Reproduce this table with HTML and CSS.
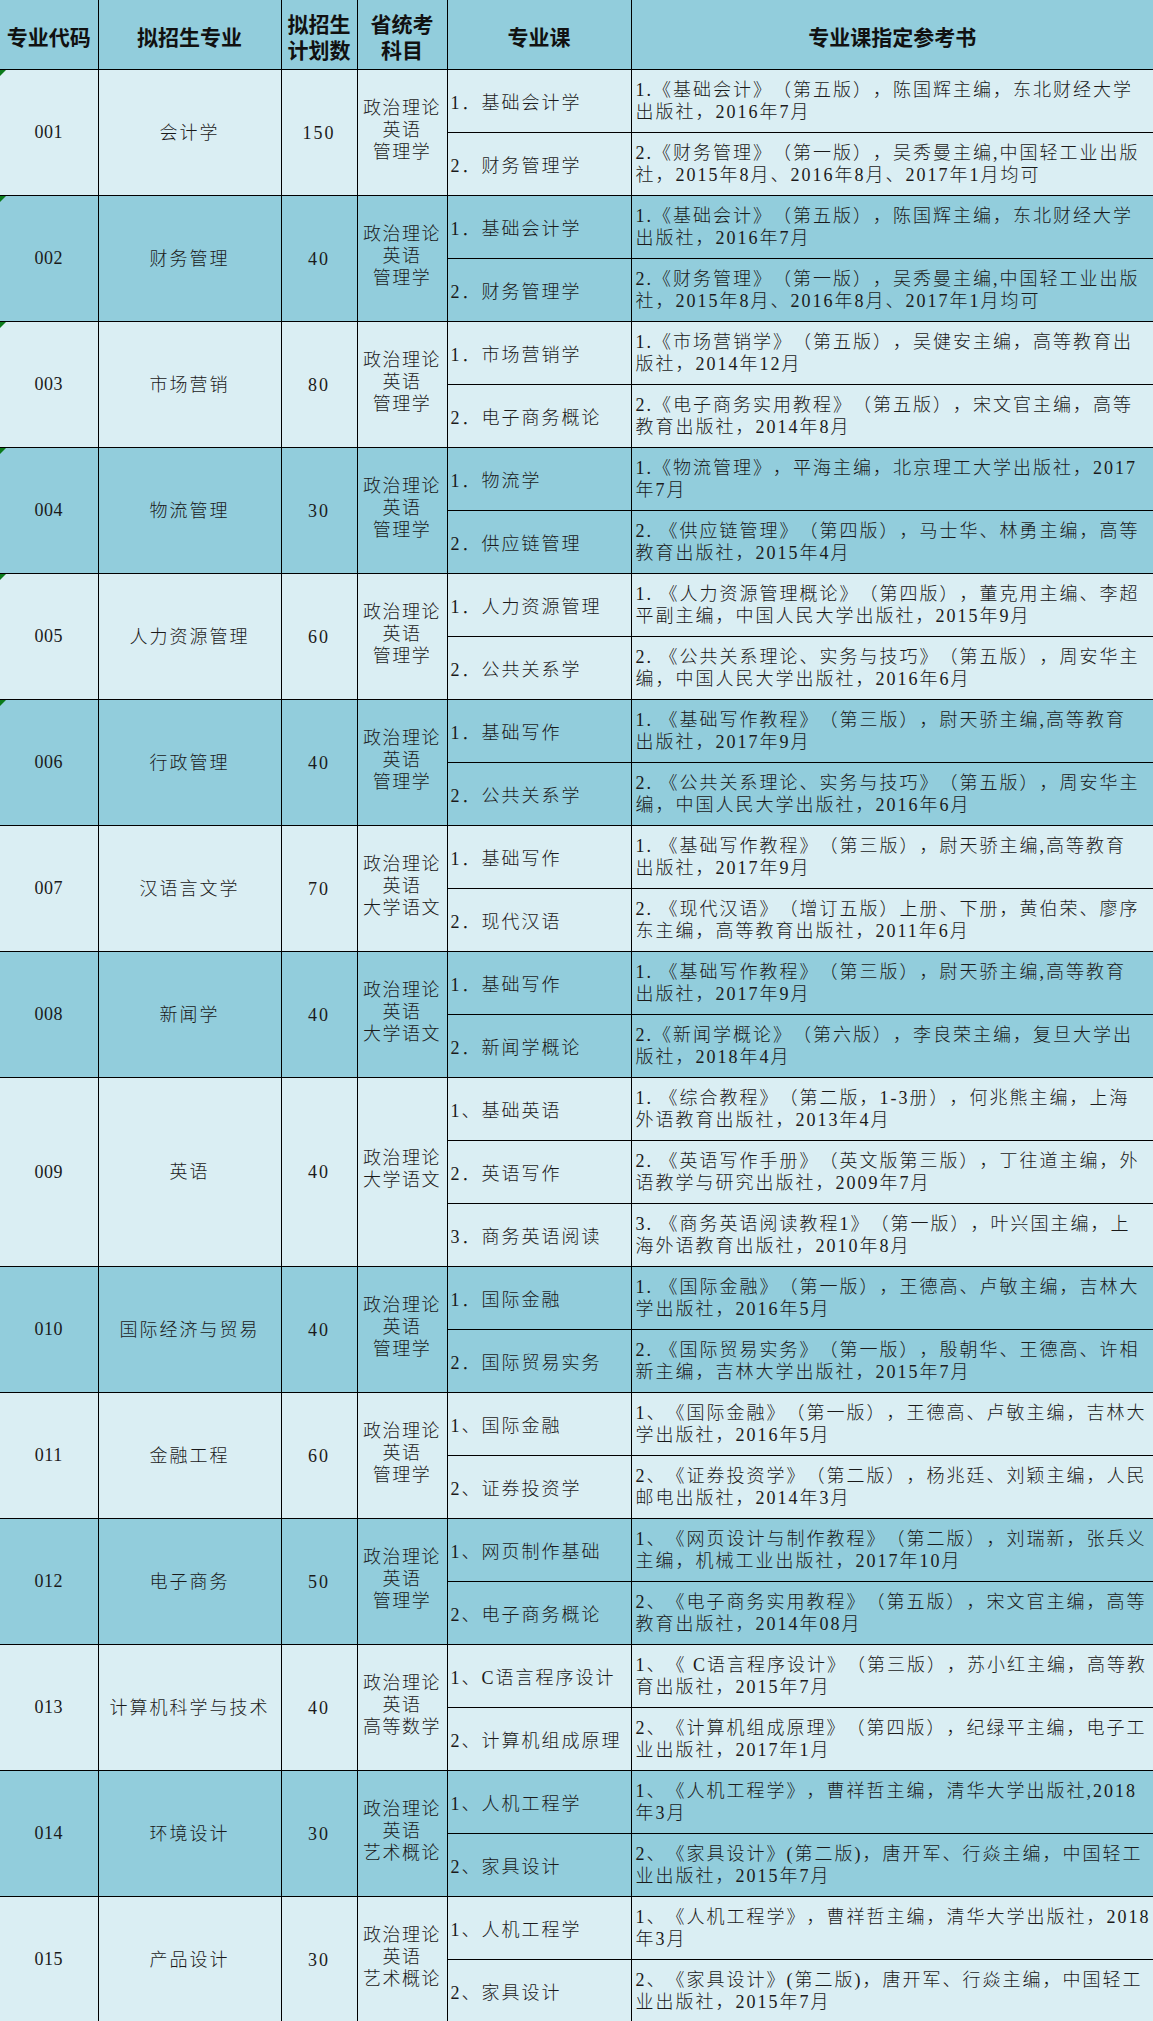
FILE: index.html
```html
<!DOCTYPE html>
<html lang="zh-CN">
<head>
<meta charset="utf-8">
<title>专业课指定参考书</title>
<link rel="stylesheet" href="styles.css">
</head>
<body>
<table class="plan">
  <colgroup>
    <col class="c-code">
    <col class="c-major">
    <col class="c-num">
    <col class="c-exam">
    <col class="c-course">
    <col class="c-book">
  </colgroup>
  <thead>
    <tr class="head">
      <th>专业代码</th>
      <th>拟招生专业</th>
      <th>拟招生<br>计划数</th>
      <th>省统考<br>科目</th>
      <th>专业课</th>
      <th>专业课指定参考书</th>
    </tr>
  </thead>
  <tbody>
    <!-- 001 -->
    <tr class="sub light">
      <td rowspan="2" class="code mark">001</td>
      <td rowspan="2" class="center">会计学</td>
      <td rowspan="2" class="center">150</td>
      <td rowspan="2" class="center exam">政治理论<br>英语<br>管理学</td>
      <td class="course">1．基础会计学</td>
      <td class="book">1.《基础会计》（第五版），陈国辉主编，东北财经大学<br>出版社，2016年7月</td>
    </tr>
    <tr class="sub light">
      <td class="course">2．财务管理学</td>
      <td class="book">2.《财务管理》（第一版），吴秀曼主编,中国轻工业出版<br>社，2015年8月、2016年8月、2017年1月均可</td>
    </tr>
    <!-- 002 -->
    <tr class="sub dark">
      <td rowspan="2" class="code mark">002</td>
      <td rowspan="2" class="center">财务管理</td>
      <td rowspan="2" class="center">40</td>
      <td rowspan="2" class="center exam">政治理论<br>英语<br>管理学</td>
      <td class="course">1．基础会计学</td>
      <td class="book">1.《基础会计》（第五版），陈国辉主编，东北财经大学<br>出版社，2016年7月</td>
    </tr>
    <tr class="sub dark">
      <td class="course">2．财务管理学</td>
      <td class="book">2.《财务管理》（第一版），吴秀曼主编,中国轻工业出版<br>社，2015年8月、2016年8月、2017年1月均可</td>
    </tr>
    <!-- 003 -->
    <tr class="sub light">
      <td rowspan="2" class="code mark">003</td>
      <td rowspan="2" class="center">市场营销</td>
      <td rowspan="2" class="center">80</td>
      <td rowspan="2" class="center exam">政治理论<br>英语<br>管理学</td>
      <td class="course">1．市场营销学</td>
      <td class="book">1.《市场营销学》（第五版），吴健安主编，高等教育出<br>版社，2014年12月</td>
    </tr>
    <tr class="sub light">
      <td class="course">2．电子商务概论</td>
      <td class="book">2.《电子商务实用教程》（第五版），宋文官主编，高等<br>教育出版社，2014年8月</td>
    </tr>
    <!-- 004 -->
    <tr class="sub dark">
      <td rowspan="2" class="code mark">004</td>
      <td rowspan="2" class="center">物流管理</td>
      <td rowspan="2" class="center">30</td>
      <td rowspan="2" class="center exam">政治理论<br>英语<br>管理学</td>
      <td class="course">1．物流学</td>
      <td class="book">1.《物流管理》，平海主编，北京理工大学出版社，2017<br>年7月</td>
    </tr>
    <tr class="sub dark">
      <td class="course">2．供应链管理</td>
      <td class="book">2. 《供应链管理》（第四版），马士华、林勇主编，高等<br>教育出版社，2015年4月</td>
    </tr>
    <!-- 005 -->
    <tr class="sub light">
      <td rowspan="2" class="code mark">005</td>
      <td rowspan="2" class="center">人力资源管理</td>
      <td rowspan="2" class="center">60</td>
      <td rowspan="2" class="center exam">政治理论<br>英语<br>管理学</td>
      <td class="course">1．人力资源管理</td>
      <td class="book">1. 《人力资源管理概论》（第四版），董克用主编、李超<br>平副主编，中国人民大学出版社，2015年9月</td>
    </tr>
    <tr class="sub light">
      <td class="course">2．公共关系学</td>
      <td class="book">2. 《公共关系理论、实务与技巧》（第五版），周安华主<br>编，中国人民大学出版社，2016年6月</td>
    </tr>
    <!-- 006 -->
    <tr class="sub dark">
      <td rowspan="2" class="code mark">006</td>
      <td rowspan="2" class="center">行政管理</td>
      <td rowspan="2" class="center">40</td>
      <td rowspan="2" class="center exam">政治理论<br>英语<br>管理学</td>
      <td class="course">1．基础写作</td>
      <td class="book">1. 《基础写作教程》（第三版），尉天骄主编,高等教育<br>出版社，2017年9月</td>
    </tr>
    <tr class="sub dark">
      <td class="course">2．公共关系学</td>
      <td class="book">2. 《公共关系理论、实务与技巧》（第五版），周安华主<br>编，中国人民大学出版社，2016年6月</td>
    </tr>
    <!-- 007 -->
    <tr class="sub light">
      <td rowspan="2" class="code">007</td>
      <td rowspan="2" class="center">汉语言文学</td>
      <td rowspan="2" class="center">70</td>
      <td rowspan="2" class="center exam">政治理论<br>英语<br>大学语文</td>
      <td class="course">1．基础写作</td>
      <td class="book">1. 《基础写作教程》（第三版），尉天骄主编,高等教育<br>出版社，2017年9月</td>
    </tr>
    <tr class="sub light">
      <td class="course">2．现代汉语</td>
      <td class="book">2. 《现代汉语》（增订五版）上册、下册，黄伯荣、廖序<br>东主编，高等教育出版社，2011年6月</td>
    </tr>
    <!-- 008 -->
    <tr class="sub dark">
      <td rowspan="2" class="code">008</td>
      <td rowspan="2" class="center">新闻学</td>
      <td rowspan="2" class="center">40</td>
      <td rowspan="2" class="center exam">政治理论<br>英语<br>大学语文</td>
      <td class="course">1．基础写作</td>
      <td class="book">1. 《基础写作教程》（第三版），尉天骄主编,高等教育<br>出版社，2017年9月</td>
    </tr>
    <tr class="sub dark">
      <td class="course">2．新闻学概论</td>
      <td class="book">2.《新闻学概论》（第六版），李良荣主编，复旦大学出<br>版社，2018年4月</td>
    </tr>
    <!-- 009 -->
    <tr class="sub light">
      <td rowspan="3" class="code">009</td>
      <td rowspan="3" class="center">英语</td>
      <td rowspan="3" class="center">40</td>
      <td rowspan="3" class="center exam">政治理论<br>大学语文</td>
      <td class="course">1、基础英语</td>
      <td class="book">1. 《综合教程》（第二版，1-3册），何兆熊主编，上海<br>外语教育出版社，2013年4月</td>
    </tr>
    <tr class="sub light">
      <td class="course">2．英语写作</td>
      <td class="book">2. 《英语写作手册》（英文版第三版），丁往道主编，外<br>语教学与研究出版社，2009年7月</td>
    </tr>
    <tr class="sub light">
      <td class="course">3．商务英语阅读</td>
      <td class="book">3. 《商务英语阅读教程1》（第一版），叶兴国主编，上<br>海外语教育出版社，2010年8月</td>
    </tr>
    <!-- 010 -->
    <tr class="sub dark">
      <td rowspan="2" class="code">010</td>
      <td rowspan="2" class="center">国际经济与贸易</td>
      <td rowspan="2" class="center">40</td>
      <td rowspan="2" class="center exam">政治理论<br>英语<br>管理学</td>
      <td class="course">1．国际金融</td>
      <td class="book">1. 《国际金融》（第一版），王德高、卢敏主编，吉林大<br>学出版社，2016年5月</td>
    </tr>
    <tr class="sub dark">
      <td class="course">2．国际贸易实务</td>
      <td class="book">2. 《国际贸易实务》（第一版），殷朝华、王德高、许相<br>新主编，吉林大学出版社，2015年7月</td>
    </tr>
    <!-- 011 -->
    <tr class="sub light">
      <td rowspan="2" class="code">011</td>
      <td rowspan="2" class="center">金融工程</td>
      <td rowspan="2" class="center">60</td>
      <td rowspan="2" class="center exam">政治理论<br>英语<br>管理学</td>
      <td class="course">1、国际金融</td>
      <td class="book">1、《国际金融》（第一版），王德高、卢敏主编，吉林大<br>学出版社，2016年5月</td>
    </tr>
    <tr class="sub light">
      <td class="course">2、证券投资学</td>
      <td class="book">2、《证券投资学》（第二版），杨兆廷、刘颖主编，人民<br>邮电出版社，2014年3月</td>
    </tr>
    <!-- 012 -->
    <tr class="sub dark">
      <td rowspan="2" class="code">012</td>
      <td rowspan="2" class="center">电子商务</td>
      <td rowspan="2" class="center">50</td>
      <td rowspan="2" class="center exam">政治理论<br>英语<br>管理学</td>
      <td class="course">1、网页制作基础</td>
      <td class="book">1、《网页设计与制作教程》（第二版），刘瑞新，张兵义<br>主编，机械工业出版社，2017年10月</td>
    </tr>
    <tr class="sub dark">
      <td class="course">2、电子商务概论</td>
      <td class="book">2、《电子商务实用教程》（第五版），宋文官主编，高等<br>教育出版社，2014年08月</td>
    </tr>
    <!-- 013 -->
    <tr class="sub light">
      <td rowspan="2" class="code">013</td>
      <td rowspan="2" class="center">计算机科学与技术</td>
      <td rowspan="2" class="center">40</td>
      <td rowspan="2" class="center exam">政治理论<br>英语<br>高等数学</td>
      <td class="course">1、C语言程序设计</td>
      <td class="book">1、《 C语言程序设计》（第三版），苏小红主编，高等教<br>育出版社，2015年7月</td>
    </tr>
    <tr class="sub light">
      <td class="course">2、计算机组成原理</td>
      <td class="book">2、《计算机组成原理》（第四版），纪绿平主编，电子工<br>业出版社，2017年1月</td>
    </tr>
    <!-- 014 -->
    <tr class="sub dark">
      <td rowspan="2" class="code">014</td>
      <td rowspan="2" class="center">环境设计</td>
      <td rowspan="2" class="center">30</td>
      <td rowspan="2" class="center exam">政治理论<br>英语<br>艺术概论</td>
      <td class="course">1、人机工程学</td>
      <td class="book">1、《人机工程学》，曹祥哲主编，清华大学出版社,2018<br>年3月</td>
    </tr>
    <tr class="sub dark">
      <td class="course">2、家具设计</td>
      <td class="book">2、《家具设计》(第二版)，唐开军、行焱主编，中国轻工<br>业出版社，2015年7月</td>
    </tr>
    <!-- 015 -->
    <tr class="sub light">
      <td rowspan="2" class="code">015</td>
      <td rowspan="2" class="center">产品设计</td>
      <td rowspan="2" class="center">30</td>
      <td rowspan="2" class="center exam">政治理论<br>英语<br>艺术概论</td>
      <td class="course">1、人机工程学</td>
      <td class="book">1、《人机工程学》，曹祥哲主编，清华大学出版社，2018<br>年3月</td>
    </tr>
    <tr class="sub light last">
      <td class="course">2、家具设计</td>
      <td class="book">2、《家具设计》(第二版)，唐开军、行焱主编，中国轻工<br>业出版社，2015年7月</td>
    </tr>
  </tbody>
</table>
</body>
</html>
```

FILE: styles.css
```css
html, body {
  margin: 0;
  padding: 0;
  background: #DAEEF3;
}

.plan {
  border-collapse: collapse;
  table-layout: fixed;
  width: 1153px;
  font-family: "Liberation Serif", "Noto Sans CJK SC", serif;
  font-size: 18px;
  font-weight: 300;
  color: #1a1a1a;
  letter-spacing: 2px;
  text-spacing-trim: space-all;
}

.c-code { width: 98px; }
.c-major { width: 183px; }
.c-num { width: 76px; }
.c-exam { width: 90px; }
.c-course { width: 184px; }
.c-book { width: 522px; }

.plan th,
.plan td {
  border: 1px solid #000;
  padding: 0;
  vertical-align: middle;
  white-space: nowrap;
  overflow: hidden;
}

.plan tr > :first-child { border-left: none; }
.plan tr > :last-child { border-right: none; }

.head th {
  height: 66px;
  border-top: none;
  background: #92CDDC;
  font-family: "Noto Sans CJK SC", serif;
  font-weight: 700;
  font-size: 21px;
  line-height: 26px;
  letter-spacing: 0;
  text-align: center;
  padding-top: 3px;
  color: #111;
}

.sub { height: 63px; }

.light td { background: #DAEEF3; }
.dark td { background: #92CDDC; }

.center {
  text-align: center;
  line-height: 22px;
}

.code {
  text-align: center;
  position: relative;
  letter-spacing: 0.5px;
}

.plan td.exam {
  line-height: 22px;
  padding-bottom: 6px;
  letter-spacing: 1.5px;
}

.mark::before {
  content: "";
  position: absolute;
  left: 0;
  top: 0;
  border-style: solid;
  border-width: 6px 6px 0 0;
  border-color: #0a7a1a transparent transparent transparent;
}

.plan td.course {
  text-align: left;
  padding-left: 3px;
}

.plan td.book {
  text-align: left;
  line-height: 22px;
  padding-left: 4px;
}
```
